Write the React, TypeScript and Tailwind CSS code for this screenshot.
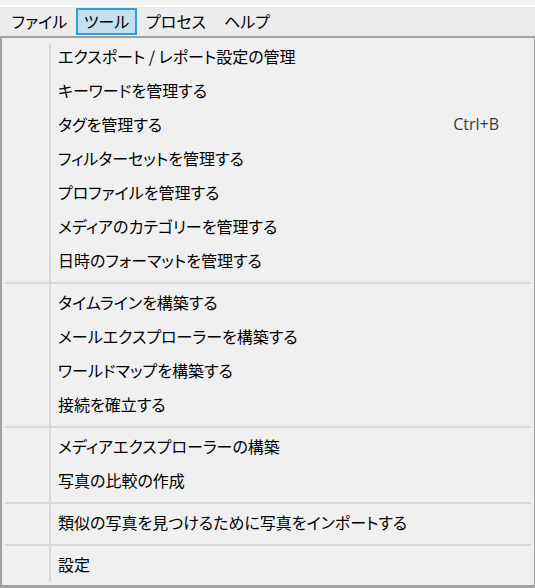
import React from 'react';

type Item = { label: string; shortcut?: string };

const groups: Item[][] = [
  [
    { label: 'エクスポート / レポート設定の管理' },
    { label: 'キーワードを管理する' },
    { label: 'タグを管理する', shortcut: 'Ctrl+B' },
    { label: 'フィルターセットを管理する' },
    { label: 'プロファイルを管理する' },
    { label: 'メディアのカテゴリーを管理する' },
    { label: '日時のフォーマットを管理する' },
  ],
  [
    { label: 'タイムラインを構築する' },
    { label: 'メールエクスプローラーを構築する' },
    { label: 'ワールドマップを構築する' },
    { label: '接続を確立する' },
  ],
  [{ label: 'メディアエクスプローラーの構築' }, { label: '写真の比較の作成' }],
  [{ label: '類似の写真を見つけるために写真をインポートする' }],
  [{ label: '設定' }],
];

const menus = [
  { label: 'ファイル', w: 'w-[73px]' },
  { label: 'ツール', w: 'w-[61px]', active: true },
  { label: 'プロセス', w: 'w-[78px]' },
  { label: 'ヘルプ', w: 'w-[64px]' },
];

function MenuRow({ item }: { item: Item }) {
  return (
    <div className="flex h-[34px] items-center pb-[3px] pl-[56px] pr-[35px]">
      <span className="flex-1 text-[16px] text-black">{item.label}</span>
      {item.shortcut && (
        <span className="font-['Open_Sans','Noto_Sans',sans-serif] text-[16px] text-[#3c3c3c] [font-feature-settings:normal]">
          {item.shortcut}
        </span>
      )}
    </div>
  );
}

export default function App() {
  return (
    <div className="w-[535px] h-[588px] overflow-hidden bg-white font-['Noto_Sans_CJK_JP',sans-serif] [font-feature-settings:'palt'] leading-none">
      <div className="h-[5px] bg-[#f2f2ee]" />
      <div className="h-[2px] bg-white" />

      {/* menu bar */}
      <div className="flex h-[29px] pl-[3px] bg-[#ececec]">
        {menus.map(m => (
          <div
            key={m.label}
            className={`${m.w} mt-[1px] h-[27px] flex items-center justify-center border-2 pb-[2px] text-[16px] text-black ${
              m.active ? 'border-[#2a9fd8] bg-[#c3dff0]' : 'border-transparent'
            }`}
          >
            {m.label}
          </div>
        ))}
      </div>

      {/* dropdown */}
      <div className="relative h-[552px] bg-[#f0f0f0] border-t-2 border-l-2 border-b-[3px] border-r border-[#a0a0a0] pt-[2px]">
        <div className="absolute left-[47px] top-[6px] bottom-[3px] w-[2px] bg-[#dadada]" />
        {groups.map((g, gi) => (
          <div key={gi}>
            {gi > 0 && (
              <div className="pt-[4px] pb-[2px] px-[3px]">
                <div className="relative h-[2px] bg-[#d8d8d8]" />
              </div>
            )}
            {g.map(item => (
              <MenuRow key={item.label} item={item} />
            ))}
          </div>
        ))}
      </div>
    </div>
  );
}
